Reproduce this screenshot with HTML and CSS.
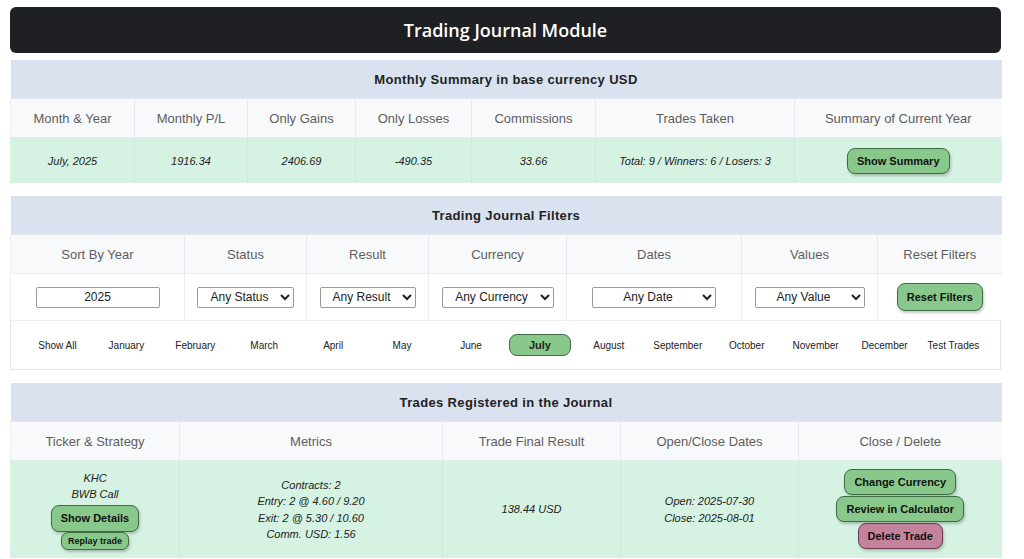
FILE: index.html
```html
<!DOCTYPE html>
<html lang="en">
<head>
<meta charset="utf-8">
<title>Trading Journal Module</title>
<link rel="stylesheet" href="styles.css">
</head>
<body>
<div class="page">
  <header class="topbar"><h1>Trading Journal Module</h1></header>

  <section class="panel">
    <table class="grid summary">
      <colgroup>
        <col style="width:124px"><col style="width:113px"><col style="width:108px"><col style="width:116px"><col style="width:124px"><col style="width:199px"><col style="width:207px">
      </colgroup>
      <thead>
        <tr class="title-row"><th colspan="7">Monthly Summary in base currency USD</th></tr>
        <tr class="head-row">
          <th>Month &amp; Year</th><th>Monthly P/L</th><th>Only Gains</th><th>Only Losses</th><th>Commissions</th><th>Trades Taken</th><th>Summary of Current Year</th>
        </tr>
      </thead>
      <tbody>
        <tr class="data-row">
          <td>July, 2025</td><td>1916.34</td><td>2406.69</td><td>-490.35</td><td>33.66</td><td>Total: 9 / Winners: 6 / Losers: 3</td>
          <td><button class="btn">Show Summary</button></td>
        </tr>
      </tbody>
    </table>
  </section>

  <section class="panel">
    <table class="grid filters">
      <colgroup>
        <col style="width:174px"><col style="width:122px"><col style="width:122px"><col style="width:138px"><col style="width:175px"><col style="width:136px"><col style="width:124px">
      </colgroup>
      <thead>
        <tr class="title-row"><th colspan="7">Trading Journal Filters</th></tr>
        <tr class="head-row">
          <th>Sort By Year</th><th>Status</th><th>Result</th><th>Currency</th><th>Dates</th><th>Values</th><th>Reset Filters</th>
        </tr>
      </thead>
      <tbody>
        <tr class="input-row">
          <td><input class="year-input" type="text" value="2025"></td>
          <td><select class="sel sel-status"><option>Any Status</option></select></td>
          <td><select class="sel sel-result"><option>Any Result</option></select></td>
          <td><select class="sel sel-currency"><option>Any Currency</option></select></td>
          <td><select class="sel sel-date"><option>Any Date</option></select></td>
          <td><select class="sel sel-value"><option>Any Value</option></select></td>
          <td><button class="btn btn-reset">Reset Filters</button></td>
        </tr>
      </tbody>
    </table>
    <nav class="months">
      <span class="month">Show All</span>
      <span class="month">January</span>
      <span class="month">February</span>
      <span class="month">March</span>
      <span class="month">April</span>
      <span class="month">May</span>
      <span class="month">June</span>
      <span class="month"><span class="month-active">July</span></span>
      <span class="month">August</span>
      <span class="month">September</span>
      <span class="month">October</span>
      <span class="month">November</span>
      <span class="month">December</span>
      <span class="month">Test Trades</span>
    </nav>
  </section>

  <section class="panel">
    <table class="grid trades">
      <colgroup>
        <col style="width:169px"><col style="width:263px"><col style="width:178px"><col style="width:178px"><col style="width:203px">
      </colgroup>
      <thead>
        <tr class="title-row"><th colspan="5">Trades Registered in the Journal</th></tr>
        <tr class="head-row">
          <th>Ticker &amp; Strategy</th><th>Metrics</th><th>Trade Final Result</th><th>Open/Close Dates</th><th>Close / Delete</th>
        </tr>
      </thead>
      <tbody>
        <tr class="data-row trade-row">
          <td>
            <div class="line">KHC</div>
            <div class="line">BWB Call</div>
            <button class="btn btn-details">Show Details</button>
            <button class="btn btn-replay">Replay trade</button>
          </td>
          <td>
            <div class="line">Contracts: 2</div>
            <div class="line">Entry: 2 @ 4.60 / 9.20</div>
            <div class="line">Exit: 2 @ 5.30 / 10.60</div>
            <div class="line">Comm. USD: 1.56</div>
          </td>
          <td>138.44 USD</td>
          <td>
            <div class="line">Open: 2025-07-30</div>
            <div class="line">Close: 2025-08-01</div>
          </td>
          <td>
            <button class="btn btn-stack">Change Currency</button>
            <button class="btn btn-stack">Review in Calculator</button>
            <button class="btn btn-stack btn-delete">Delete Trade</button>
          </td>
        </tr>
      </tbody>
    </table>
  </section>
</div>
</body>
</html>
```

FILE: styles.css
```css
html, body {
  margin: 0;
  padding: 0;
  background: #ffffff;
  overflow: hidden;
}

.page {
  width: 991px;
  margin: 0 0 0 10px;
  padding-top: 7px;
  font-family: "Liberation Sans", Arial, sans-serif;
  color: #222;
}

.topbar {
  height: 46px;
  background: #1f2023;
  border-radius: 6px;
  display: flex;
  align-items: center;
  justify-content: center;
  margin-bottom: 7px;
}

.topbar h1 {
  margin: 0;
  font-family: "Open Sans", "Noto Sans", sans-serif;
  font-weight: 600;
  font-size: 18px;
  color: #ffffff;
}

.panel {
  margin-bottom: 13px;
  background: #fff;
}

.grid {
  width: 991px;
  border-collapse: collapse;
  table-layout: fixed;
}

.grid th,
.grid td {
  padding: 0 6px;
  text-align: center;
  vertical-align: middle;
}

.title-row th {
  height: 38px;
  background: #dae2ef;
  font-size: 13px;
  font-weight: bold;
  color: #222;
  letter-spacing: 0.35px;
}

.head-row th {
  height: 38px;
  background: #f8f9fa;
  font-size: 13px;
  font-weight: normal;
  color: #5e5e5e;
  border-top: 1px solid #e6e9ee;
  border-left: 1px solid #e6e9ee;
}

.head-row th:first-child {
  border-left: 1px solid #eceef1;
}

.data-row td {
  height: 45px;
  background: #d5f2e2;
  font-size: 11px;
  font-style: italic;
  color: #222;
  border-top: 1px solid #e6e9ee;
  border-left: 1px solid #cde8d8;
}

.data-row td:first-child {
  border-left: 1px solid #d5f2e2;
}

.input-row td {
  height: 46px;
  background: #ffffff;
  border-top: 1px solid #eceef1;
  border-left: 1px solid #eceef1;
}

.btn {
  font-family: "Liberation Sans", Arial, sans-serif;
  font-size: 11px;
  font-weight: bold;
  font-style: normal;
  color: #111;
  background: #88c98b;
  border: 1px solid #3f6b45;
  border-radius: 8px;
  height: 26px;
  padding: 0 9px;
  box-shadow: 1px 2px 3px rgba(0, 0, 0, 0.22);
  cursor: pointer;
}

.btn-reset {
  height: 28px;
  padding: 0 9px;
}

.year-input {
  box-sizing: border-box;
  width: 124px;
  height: 21px;
  border: 1px solid #9a9a9a;
  border-radius: 2px;
  font-family: "Liberation Sans", Arial, sans-serif;
  font-size: 12px;
  text-align: center;
  color: #222;
  padding: 0;
}

.sel {
  box-sizing: border-box;
  height: 21px;
  border: 1px solid #9a9a9a;
  border-radius: 2px;
  background: #fff;
  font-family: "Liberation Sans", Arial, sans-serif;
  font-size: 12px;
  color: #222;
  text-align: center;
  text-align-last: center;
}

.sel-status { width: 97px; }
.sel-result { width: 96px; }
.sel-currency { width: 112px; }
.sel-date { width: 124px; }
.sel-value { width: 110px; }

.months {
  display: flex;
  align-items: center;
  height: 48px;
  padding: 0 12px 0 12px;
  border: 1px solid #e6e6e6;
  border-top: 1px solid #eceef1;
  font-size: 10px;
  color: #222;
}

.month {
  flex: 1 1 0;
  text-align: center;
}

.month-active {
  display: inline-block;
  width: 60px;
  height: 20px;
  line-height: 20px;
  background: #88c98b;
  border: 1px solid #3f6b45;
  border-radius: 8px;
  font-weight: bold;
  font-size: 11px;
}

.trade-row td {
  height: 80px;
  padding: 8px 6px;
  line-height: 16.5px;
}

.line {
  line-height: 16.5px;
}

.btn-details {
  display: block;
  margin: 2px auto 0;
  height: 27px;
  padding: 0 9px;
}

.btn-replay {
  display: block;
  margin: 0 auto;
  height: 18px;
  font-size: 9px;
  padding: 0 6px;
  border-radius: 7px;
}

.btn-stack {
  display: block;
  margin: 0 auto 1px;
}

.btn-delete {
  background: #c5829d;
  border-color: #6c3a50;
}
```
